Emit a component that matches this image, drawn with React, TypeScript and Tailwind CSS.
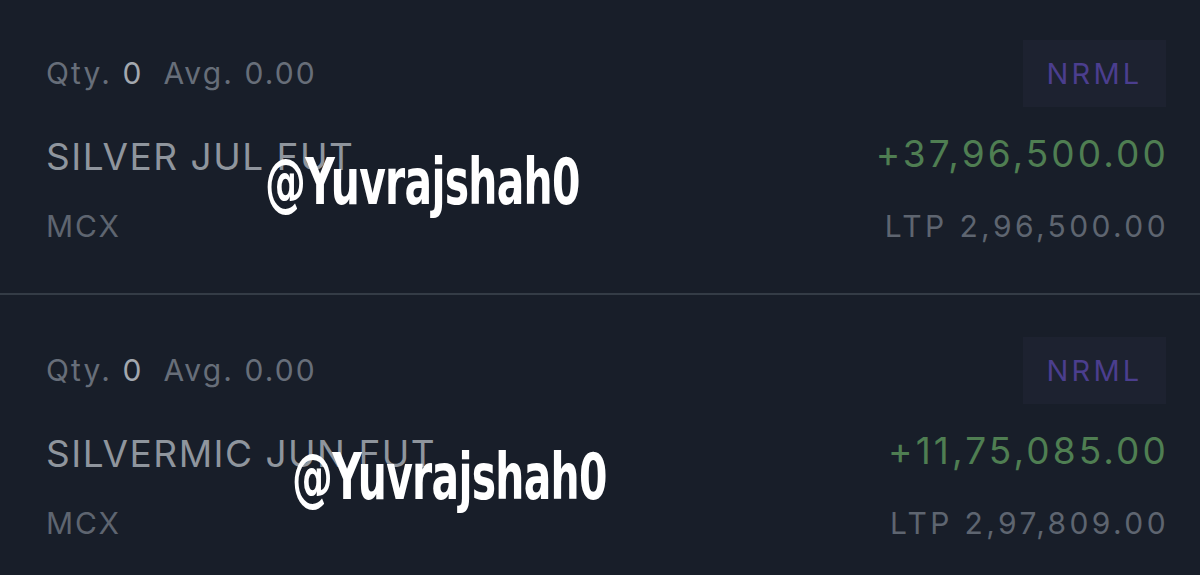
const rows = [
	{ name: "SILVER JUL FUT", pnl: "+37,96,500.00", ltp: "2,96,500.00" },
	{ name: "SILVERMIC JUN FUT", pnl: "+11,75,085.00", ltp: "2,97,809.00" },
];

function Watermark({ className }: { className: string }) {
	return (
		<div
			className={`absolute text-white font-bold leading-none origin-left scale-x-[0.71] tracking-[-1px] text-[64px] ${className}`}
			style={{ fontFamily: '"Liberation Sans Narrow", "DejaVu Sans Condensed", "Liberation Sans", sans-serif' }}
		>
			@Yuvrajshah0
		</div>
	);
}

function PositionRow({
	name,
	pnl,
	ltp,
	first,
}: {
	name: string;
	pnl: string;
	ltp: string;
	first?: boolean;
}) {
	return (
		<div
			className={`relative flex justify-between pl-[46px] pr-[34px] ${
				first ? "h-[293px] pt-[40px]" : "h-[280px] pt-[42px]"
			}`}
		>
			<div className="flex flex-col pt-[13px]">
				<div className="text-[30px] leading-[40px] text-[#676e79] tracking-[2.1px]">
					Qty. <span className="text-[#a3a8af]">0</span>
					<span className="ml-[20px]">Avg. 0.00</span>
				</div>
				<div className="mt-[42px] text-[37px] leading-[44px] text-[#8f959d] tracking-[1.5px]">
					{name}
				</div>
				<div className="mt-[27px] text-[30px] leading-[40px] text-[#5e6570] tracking-[1.8px]">
					MCX
				</div>
			</div>
			<div className="flex flex-col items-end">
				<div className="h-[67px] w-[143px] bg-[#1d2230] flex items-center justify-center text-[29px] text-[#4b3e8e] tracking-[3.2px]">
					NRML
				</div>
				<div className="mt-[25px] text-[37px] leading-[44px] text-[#4f7e52] tracking-[3.1px] -mr-[3px]">
					{pnl}
				</div>
				<div className="mt-[30px] text-[30px] leading-[40px] text-[#5e6570] tracking-[3.4px] -mr-[3px]">
					LTP {ltp}
				</div>
			</div>
		</div>
	);
}

export default function App() {
	return (
		<div
			className="relative w-[1200px] h-[575px] overflow-hidden bg-[#181e29]"
			style={{ fontFamily: 'Inter, "Noto Sans", sans-serif' }}
		>
			<PositionRow {...rows[0]} first />
			<div className="h-[2px] bg-[#343c46]" />
			<PositionRow {...rows[1]} />
			{/* watermarks over the rows */}
			<Watermark className="left-[265px] top-[150px]" />
			<Watermark className="left-[292px] top-[445px]" />
		</div>
	);
}
